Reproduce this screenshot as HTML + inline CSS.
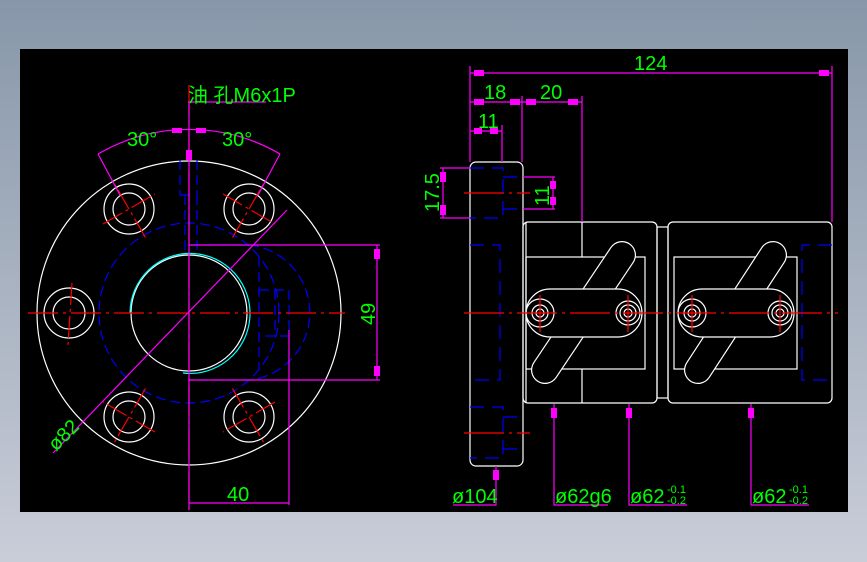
<!DOCTYPE html>
<html><head><meta charset="utf-8"><style>
html,body{margin:0;padding:0;width:867px;height:562px;overflow:hidden;background:linear-gradient(#8797a9,#c9cdd8);}
svg{position:absolute;left:0;top:0}
text{font-family:"Liberation Sans","Noto Sans CJK SC",sans-serif;fill:#00ff00;font-size:20px}
</style></head><body>
<svg width="867" height="562" viewBox="0 0 867 562">
<rect x="20" y="49" width="828" height="463" fill="#000"/>
<g fill="none" stroke-width="1.2">
<!-- LEFT VIEW -->
<g stroke="#fff">
<circle cx="189" cy="313" r="152"/>
<circle cx="189" cy="313" r="58"/>
<circle cx="129" cy="209" r="25"/><circle cx="129" cy="209" r="16"/>
<circle cx="249" cy="209" r="25"/><circle cx="249" cy="209" r="16"/>
<circle cx="129" cy="417" r="25"/><circle cx="129" cy="417" r="16"/>
<circle cx="249" cy="417" r="25"/><circle cx="249" cy="417" r="16"/>
<circle cx="69" cy="313" r="25"/><circle cx="69" cy="313" r="16"/>
</g>
<path d="M130 313 A60 60 0 1 1 183 373" stroke="#00ffff"/>
<g stroke="#0000ff" stroke-dasharray="10 5">
<circle cx="189" cy="313" r="90"/>
<path d="M180 160 V195 M197 160 V195 M180 195 H195 M185 195 V255 M197 195 V255"/>
<path d="M189 245 H250 A68 68 0 0 1 250 380 H189"/>
<path d="M259 257 V370 M275 290 V336 M259 290 H289 V336 H259"/>
</g>
<g stroke="#ff0000" stroke-dasharray="30 5 3 5">
<path d="M28 313 H345 M189 85 V510"/>
</g>
<g stroke="#ff0000" stroke-dasharray="22 4 3 4">
<path transform="translate(129,209) rotate(-120)" d="M-33 0 H33 M0 -30 V30"/>
<path transform="translate(249,209) rotate(-60)" d="M-33 0 H33 M0 -30 V30"/>
<path transform="translate(129,417) rotate(120)" d="M-33 0 H33 M0 -30 V30"/>
<path transform="translate(249,417) rotate(60)" d="M-33 0 H33 M0 -30 V30"/>
<path d="M72 283 L68 345"/>
</g>
<g stroke="#ff00ff">
<path d="M189 102 V510 M188 102 H266"/>
<path d="M98 154 A181 181 0 0 1 280 154"/>
<path d="M98 154 L120 195 M280 154 L258 195"/>
<path d="M53 453 L287 210"/>
<path d="M189 245 H380 M189 380 H380 M377 245 V380"/>
<path d="M289 330 V505 M189 503 H289"/>
</g>
<!-- RIGHT VIEW -->
<g stroke="#fff">
<rect x="470" y="162" width="53" height="304" rx="6"/>
<rect x="523" y="222" width="134" height="181" rx="5"/>
<path d="M582 222 V257 M582 369 V403 M526 222 V403"/>
<rect x="526" y="257" width="119" height="112"/>
<rect x="657" y="227" width="11" height="171"/>
<rect x="668" y="222" width="164" height="181" rx="5"/>
<rect x="674" y="257" width="123" height="112"/>
<path d="M622 255 L545 370" stroke="#fff" stroke-width="28" stroke-linecap="round"/>
<path d="M622 255 L545 370" stroke="#000" stroke-width="25.6" stroke-linecap="round"/>
<path d="M773 255 L698 370" stroke="#fff" stroke-width="28" stroke-linecap="round"/>
<path d="M773 255 L698 370" stroke="#000" stroke-width="25.6" stroke-linecap="round"/>
<rect x="526" y="289" width="116" height="48" rx="24" fill="#000"/>
<rect x="678" y="289" width="116" height="48" rx="24" fill="#000"/>
<circle cx="540" cy="313" r="14"/><circle cx="540" cy="313" r="8"/><circle cx="540" cy="313" r="4"/>
<circle cx="628" cy="313" r="12"/><circle cx="628" cy="313" r="8"/><circle cx="628" cy="313" r="4"/>
<circle cx="692" cy="313" r="14"/><circle cx="692" cy="313" r="8"/><circle cx="692" cy="313" r="4"/>
<circle cx="780" cy="313" r="12"/><circle cx="780" cy="313" r="8"/><circle cx="780" cy="313" r="4"/>
</g>
<g stroke="#0000ff" stroke-dasharray="14 8">
<path d="M470 168 H503 V218 H470 M503 177 H523 M503 209 H523"/>
<path d="M470 245 H500 V380 H470"/>
<path d="M832 245 H802 V380 H832"/>
<path d="M470 407 H503 V458 H470 M503 417 H523 M503 449 H523"/>
</g>
<g stroke="#ff0000" stroke-dasharray="40 5 3 5">
<path d="M464 313 H838"/>
<path d="M464 193 H530 M464 433 H530"/>
<path d="M540 295 V332 M628 295 V332 M692 295 V332 M780 295 V332"/>
</g>
<g stroke="#ff00ff">
<path d="M470 66 V162 M832 66 V222 M470 73 H832"/>
<path d="M522 96 V162 M582 96 V222 M470 102 H582"/>
<path d="M502 125 V162 M470 131 H502"/>
<path d="M440 168 H470 M440 218 H470 M443 168 V218"/>
<path d="M523 177 H555 M523 209 H555 M553 177 V209"/>
<path d="M496 466 V505 H453 M554 404 V505 H608 M629 404 V505 H687 M751 404 V505 H809"/>
</g>
</g>
<g fill="#ff00ff">
<rect x="186" y="150" width="6" height="10"/><rect x="172" y="128" width="10" height="5"/><rect x="196" y="128" width="10" height="5"/>
<rect x="474" y="70" width="10" height="6"/><rect x="819" y="70" width="10" height="6"/>
<rect x="474" y="99" width="10" height="6"/><rect x="510" y="99" width="10" height="6"/><rect x="526" y="99" width="10" height="6"/><rect x="568" y="99" width="10" height="6"/>
<rect x="474" y="128" width="8" height="6"/><rect x="490" y="128" width="8" height="6"/>
<rect x="440" y="172" width="6" height="10"/><rect x="440" y="205" width="6" height="10"/>
<rect x="550" y="181" width="6" height="8"/><rect x="550" y="197" width="6" height="8"/>
<rect x="374" y="249" width="6" height="10"/><rect x="374" y="366" width="6" height="10"/>
<rect x="493" y="470" width="6" height="10"/><rect x="551" y="408" width="6" height="10"/><rect x="626" y="408" width="6" height="10"/><rect x="748" y="408" width="6" height="10"/>
</g>
<text x="188" y="102">油 孔M6x1P</text>
<text x="127" y="146">30°</text>
<text x="222" y="146">30°</text>
<text x="634" y="70">124</text>
<text x="484" y="99">18</text>
<text x="540" y="99">20</text>
<text x="478" y="128">11</text>
<text transform="translate(439,212) rotate(-90)">17.5</text>
<text transform="translate(549,206) rotate(-90)">11</text>
<text transform="translate(375,325) rotate(-90)">49</text>
<text x="227" y="501">40</text>
<text transform="translate(56,452) rotate(-45)">ø82</text>
<text x="452" y="503">ø104</text>
<text x="555" y="503">ø62g6</text>
<text x="630" y="503">ø62</text>
<text x="667" y="493" style="font-size:11px">-0.1</text>
<text x="667" y="504" style="font-size:11px">-0.2</text>
<text x="752" y="503">ø62</text>
<text x="789" y="493" style="font-size:11px">-0.1</text>
<text x="789" y="504" style="font-size:11px">-0.2</text>
</svg>
</body></html>
